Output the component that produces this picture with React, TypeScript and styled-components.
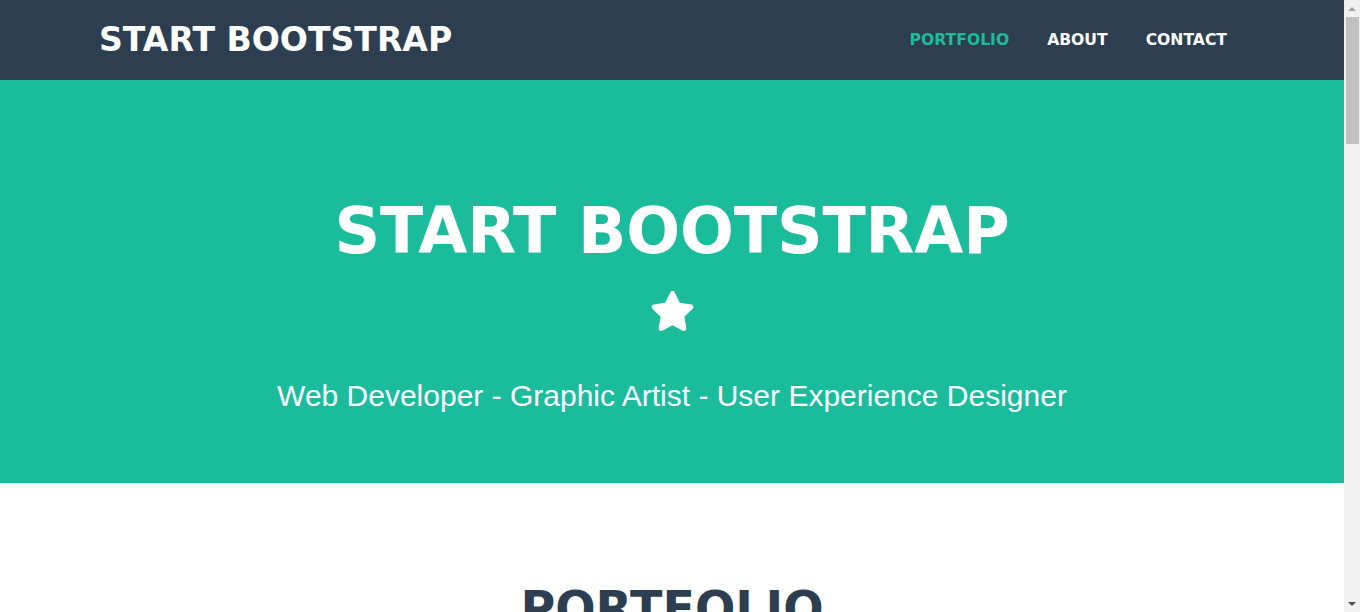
import React from "react";
import styled, { createGlobalStyle } from "styled-components";

const GlobalStyle = createGlobalStyle`
  html, body { margin: 0; padding: 0; }
  body {
    font-family: "Liberation Sans", Arial, sans-serif;
    background: #ffffff;
    color: #212529;
  }
  * { box-sizing: border-box; }
`;

const Page = styled.div`
  margin-right: 16px;
`;

const ScrollBar = styled.div`
  position: fixed;
  top: 0;
  right: 0;
  bottom: 0;
  width: 16px;
  background: #f1f1f1;
  display: flex;
  flex-direction: column;
  align-items: center;
  z-index: 10;
`;

const ScrollButton = styled.div`
  height: 17px;
  width: 100%;
  display: flex;
  align-items: center;
  justify-content: center;
`;

const ScrollTrack = styled.div`
  flex: 1;
  width: 100%;
  padding: 0 1px 0 2px;
`;

const ScrollThumb = styled.div`
  height: 127px;
  background: #c1c1c1;
`;

const NavBar = styled.nav`
  height: 80px;
  background: #2c3e50;
  display: flex;
  align-items: center;
`;

const NavContainer = styled.div`
  width: 1146px;
  margin: 0 auto;
  display: flex;
  align-items: center;
  justify-content: space-between;
`;

const Brand = styled.a`
  font-family: "DejaVu Sans", sans-serif;
  font-weight: 700;
  font-size: 33.1px;
  line-height: 1;
  color: #ffffff;
  text-decoration: none;
`;

const NavList = styled.ul`
  list-style: none;
  margin: 0;
  padding: 0 18px 0 0;
  display: flex;
  align-items: center;
  gap: 38px;
`;

const NavLink = styled.a<{ $active?: boolean }>`
  font-family: "DejaVu Sans", sans-serif;
  font-weight: 700;
  font-size: 15.6px;
  line-height: 1;
  color: ${(p) => (p.$active ? "#1abc9c" : "#ffffff")};
  text-decoration: none;
`;

const Masthead = styled.header`
  background: #1abc9c;
  height: 403px;
  display: flex;
  flex-direction: column;
  align-items: center;
  padding-top: 113px;
  color: #ffffff;
`;

const Title = styled.h1`
  margin: 0;
  font-family: "DejaVu Sans", sans-serif;
  font-weight: 700;
  font-size: 63.5px;
  line-height: 1.2;
  letter-spacing: -0.2px;
`;

const StarWrap = styled.div`
  margin-top: 21px;
  height: 41px;
  display: flex;
  align-items: center;
  justify-content: center;
`;

const Subtitle = styled.p`
  margin: 47px 0 0;
  font-family: "Liberation Sans", Arial, sans-serif;
  font-size: 30px;
  line-height: 1.2;
  font-weight: 400;
`;

const Section = styled.section`
  padding: 97px 0 80px;
  display: flex;
  flex-direction: column;
  align-items: center;
`;

const SectionTitle = styled.h2`
  margin: 0;
  font-family: "DejaVu Sans", sans-serif;
  font-weight: 700;
  font-size: 47.5px;
  line-height: 1.2;
  color: #2c3e50;
`;

const Grid = styled.div`
  margin-top: 60px;
  width: 1110px;
  display: grid;
  grid-template-columns: repeat(3, 1fr);
  gap: 30px;
`;

const Tile = styled.div`
  height: 260px;
  border-radius: 8px;
  background: #e9ecef;
`;

const Star = ({ color = "#ffffff" }: { color?: string }) => (
  <svg width="45" height="40" viewBox="0 0 576 512" aria-hidden="true">
    <path
      fill={color}
      d="M259.3 17.8L194 150.2 47.9 171.5c-26.2 3.8-36.7 36.1-17.7 54.6l105.7 103-25 145.5c-4.5 26.3 23.2 46 46.4 33.7L288 439.6l130.7 68.7c23.2 12.2 50.9-7.4 46.4-33.7l-25-145.5 105.7-103c19-18.5 8.5-50.8-17.7-54.6L382 150.2 316.7 17.8c-11.7-23.6-45.6-23.9-57.4 0z"
    />
  </svg>
);

const Arrow = ({ up, color }: { up?: boolean; color: string }) => (
  <svg width="8" height="4" viewBox="0 0 8 4" aria-hidden="true">
    <path fill={color} d={up ? "M0 4L4 0L8 4Z" : "M0 0L8 0L4 4Z"} />
  </svg>
);

export default function App() {
  return (
    <>
      <GlobalStyle />
      <Page>
        <NavBar>
          <NavContainer>
            <Brand href="#">START BOOTSTRAP</Brand>
            <NavList>
              <li>
                <NavLink href="#" $active>
                  PORTFOLIO
                </NavLink>
              </li>
              <li>
                <NavLink href="#">ABOUT</NavLink>
              </li>
              <li>
                <NavLink href="#">CONTACT</NavLink>
              </li>
            </NavList>
          </NavContainer>
        </NavBar>
        <Masthead>
          <Title>START BOOTSTRAP</Title>
          <StarWrap>
            <Star />
          </StarWrap>
          <Subtitle>Web Developer - Graphic Artist - User Experience Designer</Subtitle>
        </Masthead>
        <Section>
          <SectionTitle>PORTFOLIO</SectionTitle>
          <StarWrap>
            <Star color="#2c3e50" />
          </StarWrap>
          <Grid>
            {Array.from({ length: 6 }).map((_, i) => (
              <Tile key={i} />
            ))}
          </Grid>
        </Section>
      </Page>
      <ScrollBar>
        <ScrollButton>
          <Arrow up color="#a3a3a3" />
        </ScrollButton>
        <ScrollTrack>
          <ScrollThumb />
        </ScrollTrack>
        <ScrollButton>
          <Arrow color="#505050" />
        </ScrollButton>
      </ScrollBar>
    </>
  );
}
